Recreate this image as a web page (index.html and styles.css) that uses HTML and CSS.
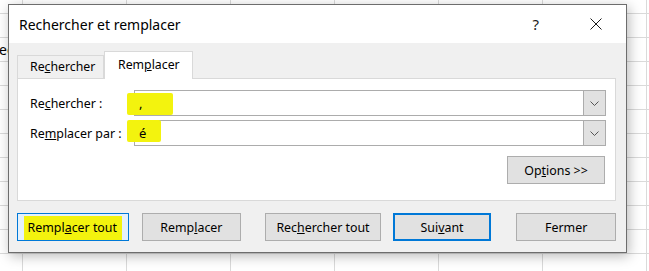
FILE: index.html
```html
<!DOCTYPE html>
<html lang="fr">
<head>
  <meta charset="UTF-8" />
  <title>Rechercher et remplacer</title>
  <link rel="stylesheet" href="styles.css">
</head>
<body>
  <div class="sheet">
    <span class="cell-text">ec</span>

    <div class="dialog">
      <div class="titlebar">
        <span class="title">Rechercher et remplacer</span>
        <span class="help">?</span>
        <svg class="close" width="12" height="12" viewBox="0 0 12 12">
          <path d="M0.5 0.5 L11.5 11.5 M11.5 0.5 L0.5 11.5" stroke="#1a1a1a" stroke-width="1" fill="none"/>
        </svg>
      </div>

      <div class="content">
        <div class="tabs">
          <div class="tab">Re<u>c</u>hercher</div>
          <div class="tab active">Rem<u>p</u>lacer</div>
        </div>

        <div class="panel">
          <div class="field">
            <label>Re<u>c</u>hercher :</label>
            <div class="combo">
              <span class="mark mark-1"></span>
              <span class="value">,</span>
              <span class="drop">
                <svg width="9" height="5" viewBox="0 0 9 5"><path d="M0.5 0.5 L4.5 4.5 L8.5 0.5" stroke="#555" fill="none"/></svg>
              </span>
            </div>
          </div>
          <div class="field">
            <label>Re<u>m</u>placer par :</label>
            <div class="combo">
              <span class="mark mark-2"></span>
              <span class="value">é</span>
              <span class="drop">
                <svg width="9" height="5" viewBox="0 0 9 5"><path d="M0.5 0.5 L4.5 4.5 L8.5 0.5" stroke="#555" fill="none"/></svg>
              </span>
            </div>
          </div>
          <div class="options-row">
            <button class="btn options">Op<u>t</u>ions &gt;&gt;</button>
          </div>
        </div>

        <div class="actions">
          <button class="btn b-all focus"><span class="hl">Rempl<u>a</u>cer tout</span></button>
          <button class="btn b-repl">Remp<u>l</u>acer</button>
          <button class="btn b-find">Rec<u>h</u>ercher tout</button>
          <button class="btn b-next default">Sui<u>v</u>ant</button>
          <button class="btn b-close">Fermer</button>
        </div>
      </div>
    </div>
  </div>
</body>
</html>
```

FILE: styles.css
```css
body {
  margin: 0;
  font-family: "Noto Sans", "Open Sans", sans-serif;
  color: #000;
}
.sheet {
  position: relative;
  width: 649px;
  height: 271px;
  overflow: hidden;
  background-color: #fff;
  background-image:
    linear-gradient(to right, #dadada 1px, transparent 1px),
    linear-gradient(to bottom, #dadada 1px, transparent 1px);
  background-size: 104px 100%, 100% 24px;
  background-position: 22px 0, 0 13px;
}
.cell-text {
  position: absolute;
  left: -1px;
  top: 40px;
  font-size: 14px;
}
.dialog {
  position: absolute;
  left: 8px;
  top: 4px;
  width: 617px;
  height: 247px;
  border: 1px solid #6d6d6d;
  background: #f0f0f0;
  box-shadow: 2px 3px 12px rgba(0, 0, 0, 0.28);
  display: flex;
  flex-direction: column;
}
.titlebar {
  height: 38px;
  background: #fff;
  display: flex;
  align-items: center;
  padding: 0 0 0 10px;
  flex-shrink: 0;
}
.title {
  font-size: 14px;
  flex: 1;
  margin-top: 1px;
}
.help {
  font-size: 15px;
  color: #1a1a1a;
  margin-right: 51px;
}
.close {
  margin-right: 24px;
}
.content {
  padding: 0 10px 0 8px;
}
.tabs {
  display: flex;
  align-items: flex-end;
  height: 36px;
  margin-bottom: -1px;
  position: relative;
  z-index: 1;
}
.tab {
  font-size: 12.3px;
  height: 22px;
  line-height: 22px;
  padding: 0 10px 0 12px;
  border: 1px solid #d9d9d9;
  border-bottom: none;
  background: #f0f0f0;
  width: 63px;
  margin-bottom: 1px;
}
.tab.active {
  background: #fff;
  height: 27px;
  line-height: 25px;
  margin-bottom: 0;
  border-left: 1px solid #d9d9d9;
  padding: 0 12px 0 13px;
  width: 62px;
}
.panel {
  background: #fff;
  border: 1px solid #d9d9d9;
  padding: 11px 9px 0 12px;
  box-sizing: border-box;
  height: 123px;
}
.field {
  display: flex;
  align-items: center;
  height: 26px;
  margin-bottom: 4px;
  font-size: 12.4px;
}
.field label {
  width: 104px;
}
.combo {
  position: relative;
  flex: 1;
  height: 26px;
  border: 1px solid #acacac;
  box-sizing: border-box;
  display: flex;
  align-items: center;
}
.value {
  position: relative;
  z-index: 2;
  padding-left: 4px;
  flex: 1;
  font-size: 13px;
}
.drop {
  width: 21px;
  height: 24px;
  background: #e1e1e1;
  border-left: 1px solid #acacac;
  display: flex;
  align-items: center;
  justify-content: center;
}
.mark {
  position: absolute;
  background: #f3f30e;
  z-index: 1;
  border-radius: 2px;
}
.mark-1 {
  left: -8px;
  top: 2px;
  width: 46px;
  height: 22px;
}
.mark-2 {
  left: -8px;
  top: -1px;
  width: 34px;
  height: 22px;
}
.options-row {
  display: flex;
  justify-content: flex-end;
  margin-top: 10px;
  padding-right: 1px;
}
.btn {
  font-family: inherit;
  font-size: 12.4px;
  height: 28px;
  background: #e1e1e1;
  border: 1px solid #adadad;
  padding: 0;
  color: #000;
}
.options {
  width: 98px;
}
.actions {
  display: flex;
  margin-top: 12px;
}
.b-all { width: 112px; }
.b-repl { width: 100px; margin-left: 13px; }
.b-find { width: 116px; margin-left: 24px; }
.b-next { width: 99px; margin-left: 12px; }
.b-close { width: 100px; margin-left: 25px; }
.btn.focus {
  background: #e5f1fb;
  border: 1px solid #0078d7;
}
.btn.default {
  border: 2px solid #0078d7;
}
.hl {
  background: #f3f30e;
  padding: 3px 5px 4px 4px;
}
```
